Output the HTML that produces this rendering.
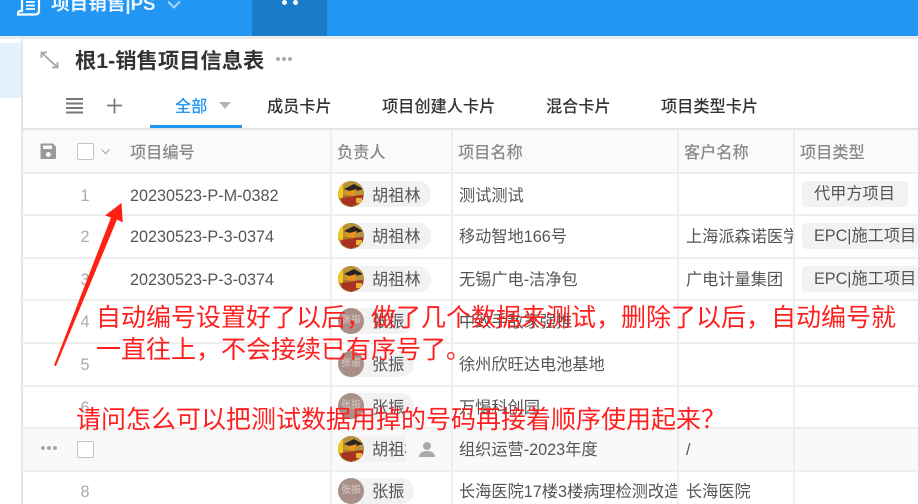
<!DOCTYPE html>
<html lang="zh"><head><meta charset="utf-8"><style>
html,body{margin:0;padding:0;width:918px;height:504px;overflow:hidden;background:#fff}
body{position:relative;font-family:"Liberation Sans","Noto Sans CJK SC",sans-serif;color:#555}
.a{position:absolute}
.t{position:absolute;font-size:16.2px;line-height:22px;white-space:nowrap;color:#555;margin-top:1px}
.h{position:absolute;font-size:16.2px;line-height:22px;white-space:nowrap;color:#8a8a8a;top:142px;font-weight:500}
.tab{position:absolute;font-size:16.2px;line-height:22px;top:96px;white-space:nowrap;color:#333;font-weight:500}
.hl{position:absolute;left:22px;width:896px;height:2px;background:#eeeeee}
.vl{position:absolute;top:130px;width:2px;height:374px;background:#eeeeee}
.n{position:absolute;width:30px;left:70px;text-align:center;font-size:16.2px;line-height:22px;color:#aaa;margin-top:1px}
.pill{position:absolute;left:338px;height:26px;background:#f2f2f2;border-radius:13px}
.tag{position:absolute;left:802px;height:26px;line-height:26px;background:#f2f2f2;border-radius:4px;font-size:16.2px;color:#555;padding:0 0 0 12px;box-sizing:border-box;white-space:nowrap;overflow:hidden}
.pn{position:absolute;left:372px;font-size:16.2px;line-height:22px;color:#555;white-space:nowrap;margin-top:1px}
.av{position:absolute;left:338px;width:26px;height:26px;border-radius:50%;overflow:hidden}
.z{background:#a89088;color:#d9cdc8;font-size:10px;line-height:26px;text-align:center}
.r{position:absolute;font-size:25px;line-height:32px;color:#ff1f1f;white-space:nowrap}
</style></head><body>
<div class="a" style="left:0;top:0;width:918px;height:36px;background:#2196f3"></div>
<div class="a" style="left:252px;top:0;width:75px;height:36px;background:#1a7cc8"></div>
<div class="a" style="left:0;top:36px;width:918px;height:3px;background:#ececec"></div>
<svg class="a" style="left:17px;top:0" width="25" height="16" viewBox="0 0 25 16"><path d="M5 0V11H3C1.500 11 1 12.500 1 14.500H18C20 14.500 22 13.500 22 11V0" fill="none" stroke="#fff" stroke-width="2.200"/><path d="M9 2H18M9 5.500H18M9 9H18" stroke="#fff" stroke-width="1.800"/></svg>
<div class="a" style="left:51px;top:-7px;font-size:18.6px;line-height:22px;font-weight:700;color:#fff;white-space:nowrap;opacity:.92">项目销售|PS</div>
<svg class="a" style="left:167px;top:0" width="14" height="10"><path d="M1 1.500L7 7.500L13 1.500" fill="none" stroke="#a8d4f8" stroke-width="2"/></svg>
<div class="a" style="left:282px;top:0;width:5px;height:5px;border-radius:50%;background:#fff"></div>
<div class="a" style="left:293px;top:0;width:5px;height:5px;border-radius:50%;background:#fff"></div>

<div class="a" style="left:0;top:43px;width:21px;height:55px;background:#e3f2fd"></div>
<div class="a" style="left:21px;top:36px;width:2px;height:468px;background:#e6e6e6"></div>

<svg class="a" style="left:40px;top:51px" width="19" height="18" viewBox="0 0 19 18"><path d="M2.500 2.500L16.500 15.500M1.500 7V1.500H7M17.500 11V16.500H12" fill="none" stroke="#a5a5a5" stroke-width="1.800"/></svg>
<div class="a" style="left:75px;top:46px;font-size:21.3px;line-height:30px;font-weight:700;color:#333;white-space:nowrap">根1-销售项目信息表</div>
<div class="a" style="left:276px;top:57px;width:4px;height:4px;border-radius:50%;background:#aaa;box-shadow:6px 0 0 #aaa,12px 0 0 #aaa"></div>

<svg class="a" style="left:66px;top:98px" width="18" height="16"><path d="M0 1H17M0 5.500H17M0 10H17M0 14.500H17" stroke="#777" stroke-width="1.900"/></svg>
<svg class="a" style="left:107px;top:98px" width="16" height="16"><path d="M7.500 0.500V15.500M0 7.500H15" stroke="#777" stroke-width="1.700"/></svg>
<div class="tab" style="left:175px;color:#2196f3">全部</div>
<svg class="a" style="left:219px;top:102px" width="13" height="8"><path d="M0 0H12L6 7Z" fill="#b5b5b5"/></svg>
<div class="a" style="left:150px;top:125px;width:92px;height:3px;background:#2196f3"></div>
<div class="tab" style="left:267px">成员卡片</div>
<div class="tab" style="left:382px">项目创建人卡片</div>
<div class="tab" style="left:546px">混合卡片</div>
<div class="tab" style="left:661px">项目类型卡片</div>
<div class="a" style="left:22px;top:128px;width:896px;height:2px;background:#e4e4e4"></div>

<div class="a" style="left:23px;top:130px;width:895px;height:42px;background:#fafafa"></div>
<div class="a" style="left:23px;top:428px;width:895px;height:42px;background:#f9f9f9"></div>

<div class="hl" style="top:172px"></div>
<div class="hl" style="top:214px"></div>
<div class="hl" style="top:257px"></div>
<div class="hl" style="top:299px"></div>
<div class="hl" style="top:342px"></div>
<div class="hl" style="top:385px"></div>
<div class="hl" style="top:427px"></div>
<div class="hl" style="top:470px"></div>
<div class="vl" style="left:330px"></div>
<div class="vl" style="left:451px"></div>
<div class="vl" style="left:677px"></div>
<div class="vl" style="left:793px"></div>

<svg class="a" style="left:40px;top:143px" width="17" height="17" viewBox="0 0 17 17"><path fill-rule="evenodd" d="M1.500 0.500H13L16 3.500V15C16 15.800 15.500 16 15 16H2C1 16 0.500 15.800 0.500 15V1.500C0.500 1 1 0.500 1.500 0.500ZM3 2.500V6H12V2.500ZM8.300 9A2.500 2.500 0 1 0 8.310 9Z" fill="#9a9a9a"/></svg>
<div class="a" style="left:77px;top:143px;width:17px;height:17px;box-sizing:border-box;border:1px solid #c4c4c4;border-radius:2px;background:#fff"></div>
<svg class="a" style="left:101px;top:149px" width="9" height="6"><path d="M0.500 0.500L4.500 4.500L8.500 0.500" fill="none" stroke="#aaa" stroke-width="1.200"/></svg>
<div class="h" style="left:130px">项目编号</div>
<div class="h" style="left:337px">负责人</div>
<div class="h" style="left:458px">项目名称</div>
<div class="h" style="left:684px">客户名称</div>
<div class="h" style="left:800px">项目类型</div>

<div class="n" style="top:184px">1</div>
<div class="n" style="top:225px">2</div>
<div class="n" style="top:268px">3</div>
<div class="n" style="top:310px">4</div>
<div class="n" style="top:353px">5</div>
<div class="n" style="top:396px">6</div>
<div class="n" style="top:480px">8</div>
<div class="a" style="left:41px;top:446px;width:4px;height:4px;border-radius:50%;background:#aaa;box-shadow:6px 0 0 #aaa,12px 0 0 #aaa"></div>
<div class="a" style="left:77px;top:441px;width:17px;height:17px;box-sizing:border-box;border:1px solid #c4c4c4;border-radius:2px;background:#fff"></div>

<div class="t" style="left:130px;top:184px">20230523-P-M-0382</div>
<div class="t" style="left:130px;top:225px">20230523-P-3-0374</div>
<div class="t" style="left:130px;top:268px">20230523-P-3-0374</div>

<div class="pill" style="top:181px;width:93px"></div>
<div class="pill" style="top:223px;width:93px"></div>
<div class="pill" style="top:266px;width:93px"></div>
<div class="pill" style="top:308px;width:76px"></div>
<div class="pill" style="top:351px;width:76px"></div>
<div class="pill" style="top:393px;width:76px"></div>
<div class="a" style="left:338px;top:436px;width:68px;height:26px;background:#f2f2f2;border-radius:13px 0 0 13px"></div>
<div class="pill" style="top:478px;width:76px"></div>

<svg width="0" height="0" style="position:absolute"><defs><g id="hu"><circle cx="13" cy="13" r="13" fill="#a87a2c"/><path d="M0 8L5 0H21L26 8V14H0Z" fill="#b8923c"/><path d="M0 6L5 0V20L0 15Z" fill="#f2c81e"/><path d="M6 8L16 3L25 8L15 11Z" fill="#2b2320"/><path d="M7 11L19 8L16 15L9 14Z" fill="#e8951c"/><path d="M3 17L25 14V20L13 26L4 22Z" fill="#a8321f"/><path d="M18 17H24V22H18Z" fill="#e9b23a"/></g></defs></svg>
<svg class="av" style="top:181px" viewBox="0 0 26 26"><use href="#hu"/></svg>
<svg class="av" style="top:223px" viewBox="0 0 26 26"><use href="#hu"/></svg>
<svg class="av" style="top:266px" viewBox="0 0 26 26"><use href="#hu"/></svg>
<svg class="av" style="top:436px" viewBox="0 0 26 26"><use href="#hu"/></svg>
<div class="av z" style="top:308px">张振</div>
<div class="av z" style="top:351px">张振</div>
<div class="av z" style="top:393px">张振</div>
<div class="av z" style="top:478px">张振</div>

<div class="pn" style="top:184px">胡祖林</div>
<div class="pn" style="top:225px">胡祖林</div>
<div class="pn" style="top:268px">胡祖林</div>
<div class="pn" style="top:310px">张振</div>
<div class="pn" style="top:353px">张振</div>
<div class="pn" style="top:396px">张振</div>
<div class="pn" style="top:438px;width:34px;overflow:hidden">胡祖林</div>
<div class="pn" style="top:480px">张振</div>
<svg class="a" style="left:418px;top:441px" width="18" height="17" viewBox="0 0 18 17"><circle cx="9" cy="5" r="4" fill="#aaa"/><path d="M1 16C1 11.500 5 10 9 10S17 11.500 17 16Z" fill="#aaa"/></svg>

<div class="t" style="left:459px;top:184px">测试测试</div>
<div class="t" style="left:459px;top:225px">移动智地166号</div>
<div class="t" style="left:459px;top:268px">无锡广电-洁净包</div>
<div class="t" style="left:459px;top:310px">中致手敌家强推</div>
<div class="t" style="left:459px;top:353px">徐州欣旺达电池基地</div>
<div class="t" style="left:459px;top:396px">万愒科创园</div>
<div class="t" style="left:459px;top:438px">组织运营-2023年度</div>
<div class="t" style="left:459px;top:480px;width:218px;overflow:hidden">长海医院17楼3楼病理检测改造</div>
<div class="t" style="left:686px;top:225px;width:107px;overflow:hidden">上海派森诺医学</div>
<div class="t" style="left:686px;top:268px">广电计量集团</div>
<div class="t" style="left:686px;top:438px">/</div>
<div class="t" style="left:686px;top:480px">长海医院</div>

<div class="tag" style="top:181px;width:106px">代甲方项目</div>
<div class="tag" style="top:223px;width:116px">EPC|施工项目</div>
<div class="tag" style="top:266px;width:116px">EPC|施工项目</div>

<svg class="a" style="left:0;top:0" width="918" height="504"><path d="M121.500 203L105 215.500L111 217.500L54 365.500L56 366L117 219.500L122.800 222.500Z" fill="#ff2012"/></svg>
<div class="r" style="left:96px;top:302px">自动编号设置好了以后，做了几个数据来测试，删除了以后，自动编号就</div>
<div class="r" style="left:96px;top:334px">一直往上，不会接续已有序号了。</div>
<div class="r" style="left:76px;top:404px">请问怎么可以把测试数据用掉的号码再接着顺序使用起来？</div>
</body></html>
